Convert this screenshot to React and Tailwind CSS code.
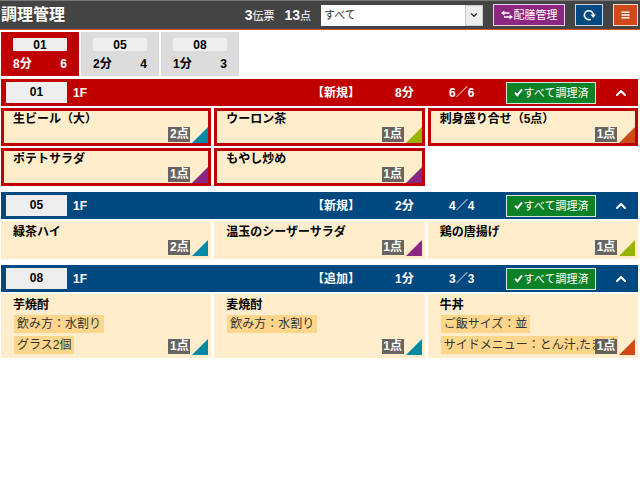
import React, { useState } from "react";
import { ChevronUp, ChevronDown } from "lucide-react";
import clsx from "clsx";

const TICKETS = [
  {
    no: "01",
    floor: "1F",
    kind: "新規",
    minutes: 8,
    count: 6,
    late: true,
    items: [
      { name: "生ビール（大）", qty: 2, corner: "text-[#0089a3]" },
      { name: "ウーロン茶", qty: 1, corner: "text-[#98b200]" },
      { name: "刺身盛り合せ（5点）", qty: 1, corner: "text-[#cf4a1a]" },
      { name: "ポテトサラダ", qty: 1, corner: "text-[#8d2680]" },
      { name: "もやし炒め", qty: 1, corner: "text-[#8d2680]" },
    ],
  },
  {
    no: "05",
    floor: "1F",
    kind: "新規",
    minutes: 2,
    count: 4,
    items: [
      { name: "緑茶ハイ", qty: 2, corner: "text-[#0089a3]" },
      { name: "温玉のシーザーサラダ", qty: 1, corner: "text-[#8d2680]" },
      { name: "鶏の唐揚げ", qty: 1, corner: "text-[#98b200]" },
    ],
  },
  {
    no: "08",
    floor: "1F",
    kind: "追加",
    minutes: 1,
    count: 3,
    items: [
      { name: "芋焼酎", qty: 1, corner: "text-[#0089a3]", options: ["飲み方：水割り", "グラス2個"] },
      { name: "麦焼酎", qty: 1, corner: "text-[#0089a3]", options: ["飲み方：水割り"] },
      { name: "牛丼", qty: 1, corner: "text-[#cf4a1a]", options: ["ご飯サイズ：並", "サイドメニュー：とん汁,たまご"] },
    ],
  },
];

const App = () => {
  const [selected, setSelected] = useState("01");
  const [closed, setClosed] = useState({});

  const toggle = (no) => setClosed({ ...closed, [no]: !closed[no] });

  return (
    <div className="min-h-screen bg-white text-black text-[12px] leading-4 font-['Liberation_Sans','Noto_Sans_CJK_JP',sans-serif]">
      <Header />

      {/* 伝票タブ */}
      <nav className="flex gap-[2px] pl-px pt-[2px]">
        {TICKETS.map((t) => (
          <button
            key={t.no}
            type="button"
            onClick={() => setSelected(t.no)}
            className={clsx(
              "w-[78px] h-11 px-3 pt-[6px] flex flex-col gap-[5px] font-bold",
              selected === t.no ? "bg-[#c00000] text-white" : "bg-[#dcdcdc] text-black"
            )}
          >
            <span className="w-full h-[13px] leading-[14px] bg-[#eee] text-black text-center">{t.no}</span>
            <span className="w-full flex justify-between">
              <span>{t.minutes}分</span>
              <span>{t.count}</span>
            </span>
          </button>
        ))}
      </nav>

      <main className="flex flex-col gap-[6px] pl-px pr-[2px] pt-[3px]">
        {TICKETS.map((t) => (
          <Ticket key={t.no} ticket={t} open={!closed[t.no]} onToggle={() => toggle(t.no)} />
        ))}
      </main>
    </div>
  );
};

const Header = () => (
  <header className="h-[30px] flex items-center gap-[10px] pl-px pr-[2px] bg-[#444] text-white border-t border-t-[#777] border-b border-b-[#d9531e]">
    <h1 className="flex-1 text-[16px] leading-5 font-bold whitespace-nowrap">調理管理</h1>
    <p className="text-[11px] whitespace-nowrap">
      <b className="text-[14px]">3</b>伝票
    </p>
    <p className="text-[11px] whitespace-nowrap">
      <b className="text-[14px]">13</b>点
    </p>
    <div className="relative w-[162px] h-[21px]">
      <select
        aria-label="表示する伝票"
        className="appearance-none w-full h-full pl-[3px] pr-5 bg-white text-[#333] text-[11px] rounded-none outline-none"
      >
        <option>すべて</option>
      </select>
      <span className="absolute right-0 top-0 w-[18px] h-[21px] flex items-center justify-center bg-[#eee] border border-[#ccc] text-[#222] pointer-events-none">
        <ChevronDown size={10} strokeWidth={3} />
      </span>
    </div>
    <button type="button" className="w-[72px] h-[22px] flex items-center justify-center gap-px bg-[#8d2680] border border-[#e8d5e5] text-[11px] whitespace-nowrap">
      <ExchangeIcon />
      配膳管理
    </button>
    <button type="button" aria-label="更新" className="w-7 h-[22px] flex items-center justify-center bg-[#004880] border border-[#ccd9e5]">
      <ReloadIcon />
    </button>
    <button type="button" aria-label="メニュー" className="w-[25px] h-[22px] flex items-center justify-center bg-[#cf4a1a] border border-[#f5dbd0]">
      <svg width="9" height="8" viewBox="0 0 9 8" fill="none" stroke="currentColor" strokeWidth="1.5">
        <path d="M.5 1.2h8M.5 4h8M.5 6.8h8" />
      </svg>
    </button>
  </header>
);

const Ticket = ({ ticket, open, onToggle }) => (
  <section className="flex flex-col gap-[2px]">
    <div
      className={clsx(
        "h-[27px] flex items-center pl-[5px] pr-[9px] text-white font-bold whitespace-nowrap",
        ticket.late ? "bg-[#c00000]" : "bg-[#004880]"
      )}
    >
      <span className="w-[61px] h-[21px] leading-[21px] bg-[#eee] text-black text-center">{ticket.no}</span>
      <span className="flex-1 pl-[6px]">{ticket.floor}</span>
      <span className="w-[83px]">【{ticket.kind}】</span>
      <span className="w-[54px]">{ticket.minutes}分</span>
      <span className="w-[57px]">
        {ticket.count}／{ticket.count}
      </span>
      <button
        type="button"
        className="w-[90px] h-[22px] flex items-center justify-center gap-px bg-[#0c8228] border border-[#d5ebd9] text-[11px] font-normal"
      >
        <CheckIcon />
        すべて調理済
      </button>
      <button type="button" aria-label="開閉" aria-expanded={open} onClick={onToggle} className="ml-[17px]">
        <ChevronUp size={16} strokeWidth={3} className={clsx(!open && "rotate-180")} />
      </button>
    </div>

    {open && (
      <ul className="grid grid-cols-3 gap-x-[3px] gap-y-[2px]">
        {ticket.items.map((item) => (
          <Item key={item.name} item={item} late={ticket.late} />
        ))}
      </ul>
    )}
  </section>
);

const Item = ({ item, late }) => (
  <li
    className={clsx(
      "relative min-w-0 min-h-[38px] border-[3px] pl-[9px] pr-[15px] bg-[#ffedcc]",
      late ? "border-[#c00000]" : "border-[#ffedcc]"
    )}
  >
    <p className="font-bold leading-4 truncate">{item.name}</p>
    {item.options && (
      <ul className="flex flex-col items-start gap-[3px] pt-[2px] pb-px pl-px">
        {item.options.map((o) => (
          <li key={o} className="max-w-full h-[18px] leading-[18px] px-[3px] bg-[#ffd68c] text-[#333] whitespace-nowrap overflow-hidden">
            {o}
          </li>
        ))}
      </ul>
    )}
    {/* 数量バッジと区分の三角 */}
    <span className="absolute right-[18px] bottom-px w-[22px] h-[15px] leading-[15px] bg-[#555]/90 text-white font-bold text-center whitespace-nowrap">
      {item.qty}点
    </span>
    <svg className={clsx("absolute right-0 bottom-0", item.corner)} width="16" height="16" viewBox="0 0 16 16" fill="currentColor">
      <path d="M16 0v16H0z" />
    </svg>
  </li>
);

const CheckIcon = () => (
  <svg width="9" height="9" viewBox="0 0 9 9" fill="none" stroke="currentColor" strokeWidth="2">
    <path d="M1 4.6l2.4 2.7L8 1.4" />
  </svg>
);

// 上は左向き、下は右向きの矢印
const ExchangeIcon = () => (
  <svg width="12" height="10" viewBox="0 0 12 10" fill="none" stroke="currentColor" strokeWidth="1.5">
    <path d="M2 3h6.5M3 7h7" />
    <path d="M0 3L3.4 .6v4.8zM12 7L8.6 4.6v4.8z" fill="currentColor" stroke="none" />
  </svg>
);

const ReloadIcon = () => (
  <svg width="13" height="12" viewBox="0 0 13 12" fill="none" stroke="currentColor" strokeWidth="1.6">
    <path d="M7.8 10.3A4.5 4.5 0 1 1 10.4 6" />
    <path d="M7.4 5.6h5.6L10.3 9z" fill="currentColor" stroke="none" />
  </svg>
);

export default App;
